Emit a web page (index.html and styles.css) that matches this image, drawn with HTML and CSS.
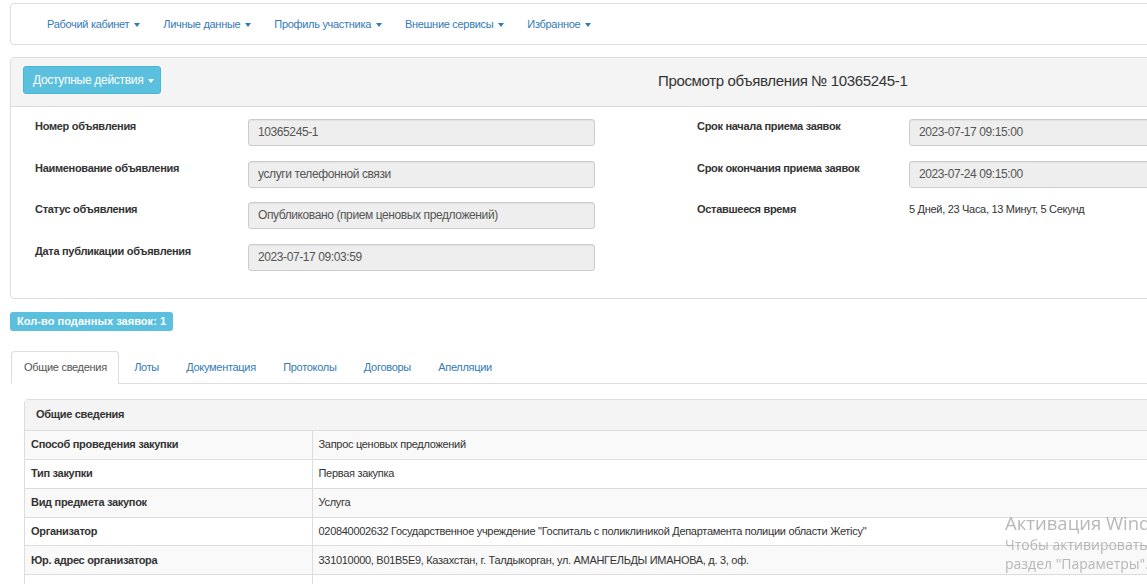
FILE: index.html
```html
<!DOCTYPE html>
<html lang="ru">
<head>
<meta charset="utf-8">
<title>Просмотр объявления</title>
<link rel="stylesheet" href="styles.css">
</head>
<body>
<div class="page">
  <nav class="navbar">
    <ul class="nav-menu">
      <li><a href="#">Рабочий кабинет <span class="caret"></span></a></li>
      <li><a href="#">Личные данные <span class="caret"></span></a></li>
      <li><a href="#">Профиль участника <span class="caret"></span></a></li>
      <li><a href="#">Внешние сервисы <span class="caret"></span></a></li>
      <li><a href="#">Избранное <span class="caret"></span></a></li>
    </ul>
  </nav>

  <section class="panel main-panel">
    <div class="panel-heading">
      <button class="btn-info" type="button">Доступные действия <span class="caret caret-white"></span></button>
      <h1 class="title">Просмотр объявления № 10365245-1</h1>
    </div>
    <div class="panel-body">
      <div class="col">
        <div class="form-row"><div class="label">Номер объявления</div><div class="input">10365245-1</div></div>
        <div class="form-row"><div class="label">Наименование объявления</div><div class="input">услуги телефонной связи</div></div>
        <div class="form-row"><div class="label">Статус объявления</div><div class="input">Опубликовано (прием ценовых предложений)</div></div>
        <div class="form-row"><div class="label">Дата публикации объявления</div><div class="input">2023-07-17 09:03:59</div></div>
      </div>
      <div class="col col-right">
        <div class="form-row"><div class="label">Срок начала приема заявок</div><div class="input">2023-07-17 09:15:00</div></div>
        <div class="form-row"><div class="label">Срок окончания приема заявок</div><div class="input">2023-07-24 09:15:00</div></div>
        <div class="form-row"><div class="label">Оставшееся время</div><div class="value">5 Дней, 23 Часа, 13 Минут, 5 Секунд</div></div>
      </div>
    </div>
  </section>

  <div class="badge-row"><span class="badge">Кол-во поданных заявок: 1</span></div>

  <ul class="tabs">
    <li class="active"><a href="#">Общие сведения</a></li>
    <li><a href="#">Лоты</a></li>
    <li><a href="#">Документация</a></li>
    <li><a href="#">Протоколы</a></li>
    <li><a href="#">Договоры</a></li>
    <li><a href="#">Апелляции</a></li>
  </ul>

  <section class="panel info-panel">
    <div class="info-heading">Общие сведения</div>
    <table class="info-table">
      <tbody>
        <tr><th>Способ проведения закупки</th><td>Запрос ценовых предложений</td></tr>
        <tr><th>Тип закупки</th><td>Первая закупка</td></tr>
        <tr><th>Вид предмета закупок</th><td>Услуга</td></tr>
        <tr><th>Организатор</th><td>020840002632 Государственное учреждение "Госпиталь с поликлиникой Департамента полиции области Жетісу"</td></tr>
        <tr><th>Юр. адрес организатора</th><td>331010000, B01B5E9, Казахстан, г. Талдыкорган, ул. АМАНГЕЛЬДЫ ИМАНОВА, д. 3, оф.</td></tr>
        <tr><th>&nbsp;</th><td>&nbsp;</td></tr>
      </tbody>
    </table>
  </section>
</div>

<div class="watermark">
  <div class="wm-title">Активация Windows</div>
  <div class="wm-text">Чтобы активировать Windows, перейдите в</div>
  <div class="wm-text">раздел "Параметры".</div>
</div>
</body>
</html>
```

FILE: styles.css
```css
* { box-sizing: border-box; }
html, body { margin: 0; padding: 0; }
body {
  font-family: "Liberation Sans", Arial, sans-serif;
  font-size: 11px;
  line-height: 15px;
  letter-spacing: -0.3px;
  color: #333;
  background: #fff;
  overflow: hidden;
  width: 1147px;
  height: 584px;
}
a { text-decoration: none; }

.page {
  width: 1420px;
  padding-left: 10px;
}

/* navbar */
.navbar {
  margin-top: 3px;
  height: 42px;
  border: 1px solid #dcdcdc;
  border-radius: 4px;
  background: #fff;
  display: flex;
  align-items: center;
}
.nav-menu {
  list-style: none;
  margin: 0;
  padding: 0 0 0 24.4px;
  display: flex;
}
.nav-menu a {
  display: block;
  padding: 0 11.6px;
  color: #337ab7;
  font-size: 11px;
}
.caret {
  display: inline-block;
  width: 0;
  height: 0;
  margin-left: 2px;
  vertical-align: middle;
  border-top: 4px solid #337ab7;
  border-left: 3.5px solid transparent;
  border-right: 3.5px solid transparent;
}
.caret-white { border-top-color: #fff; }

/* panel */
.panel {
  border: 1px solid #ddd;
  border-radius: 4px;
  background: #fff;
}
.main-panel { margin-top: 12px; }
.panel-heading {
  background: #f4f4f4;
  border-bottom: 1px solid #ddd;
  padding: 8px 12px 12px;
  display: flex;
  align-items: center;
  border-radius: 4px 4px 0 0;
}
.btn-info {
  height: 28px;
  width: 138px;
  padding: 0 0 0 9px;
  text-align: left;
  white-space: nowrap;
  background: #5bc0de;
  border: 1px solid #46b8da;
  border-radius: 3px;
  color: #fff;
  font-family: "Liberation Sans", Arial, sans-serif;
  font-size: 12px;
  letter-spacing: -0.3px;
}
.title {
  margin: 0 0 0 497px;
  font-size: 15px;
  font-weight: normal;
  color: #333;
  line-height: 20px;
  letter-spacing: -0.35px;
  position: relative;
  top: 1px;
}
.panel-body {
  padding: 12px 0 12px 24px;
  display: grid;
  grid-template-columns: 662px 662px;
}
.form-row {
  display: grid;
  grid-template-columns: 213px 347px;
  margin-bottom: 14.67px;
  min-height: 27px;
}
.col-right .form-row { grid-template-columns: 212px 347px; }
.label {
  font-weight: bold;
  color: #333;
}
.input {
  height: 27px;
  border: 1px solid #ccc;
  border-radius: 3px;
  background: #eee;
  color: #555;
  padding: 5px 9px;
  font-size: 12px;
  letter-spacing: -0.4px;
  line-height: 15px;
  box-shadow: inset 0 1px 1px rgba(0,0,0,0.05);
}
.value { color: #333; }

/* badge */
.badge-row { margin-top: 13px; display: flex; }
.badge {
  display: block;
  background: #5bc0de;
  color: #fff;
  font-weight: bold;
  font-size: 11px;
  letter-spacing: 0.05px;
  line-height: 19px;
  height: 19px;
  padding: 0 7px;
  border-radius: 3px;
}

/* tabs */
.tabs {
  list-style: none;
  margin: 20px 0 0 1px;
  padding: 0;
  display: flex;
  border-bottom: 1px solid #ddd;
}
.tabs li { margin: 0 2px -1px 0; }
.tabs a {
  display: block;
  height: 33px;
  line-height: 31px;
  padding: 0 11.3px 0 12px;
  border: 1px solid transparent;
  border-radius: 4px 4px 0 0;
  color: #337ab7;
}
.tabs .active a {
  color: #555;
  background: #fff;
  border-color: #ddd #ddd transparent;
}

/* info panel */
.info-panel {
  margin: 15px 0 0 14px;
  border-radius: 4px;
}
.info-heading {
  background: #f4f4f4;
  border-bottom: 1px solid #ddd;
  height: 31px;
  line-height: 29px;
  padding-left: 11px;
  font-weight: bold;
}
.info-table {
  width: 100%;
  border-collapse: collapse;
}
.info-table th,
.info-table td {
  text-align: left;
  height: 28.8px;
  padding: 6px 6px;
  border-top: 1px solid #ddd;
  vertical-align: middle;
  line-height: 15px;
}
.info-table tr:first-child th,
.info-table tr:first-child td { border-top: none; }
.info-table th {
  width: 287px;
  font-weight: bold;
  border-right: 1px solid #ddd;
}
.info-table tbody tr:nth-child(odd) { background: #f9f9f9; }

/* watermark */
.watermark {
  position: fixed;
  left: 1005px;
  top: 511px;
  color: rgba(160,160,160,0.75);
  font-family: "Open Sans", "Noto Sans", sans-serif;
  letter-spacing: 0;
  white-space: nowrap;
  pointer-events: none;
}
.wm-title { font-size: 18.5px; line-height: 24px; }
.wm-text { font-size: 14px; line-height: 19px; }
```
